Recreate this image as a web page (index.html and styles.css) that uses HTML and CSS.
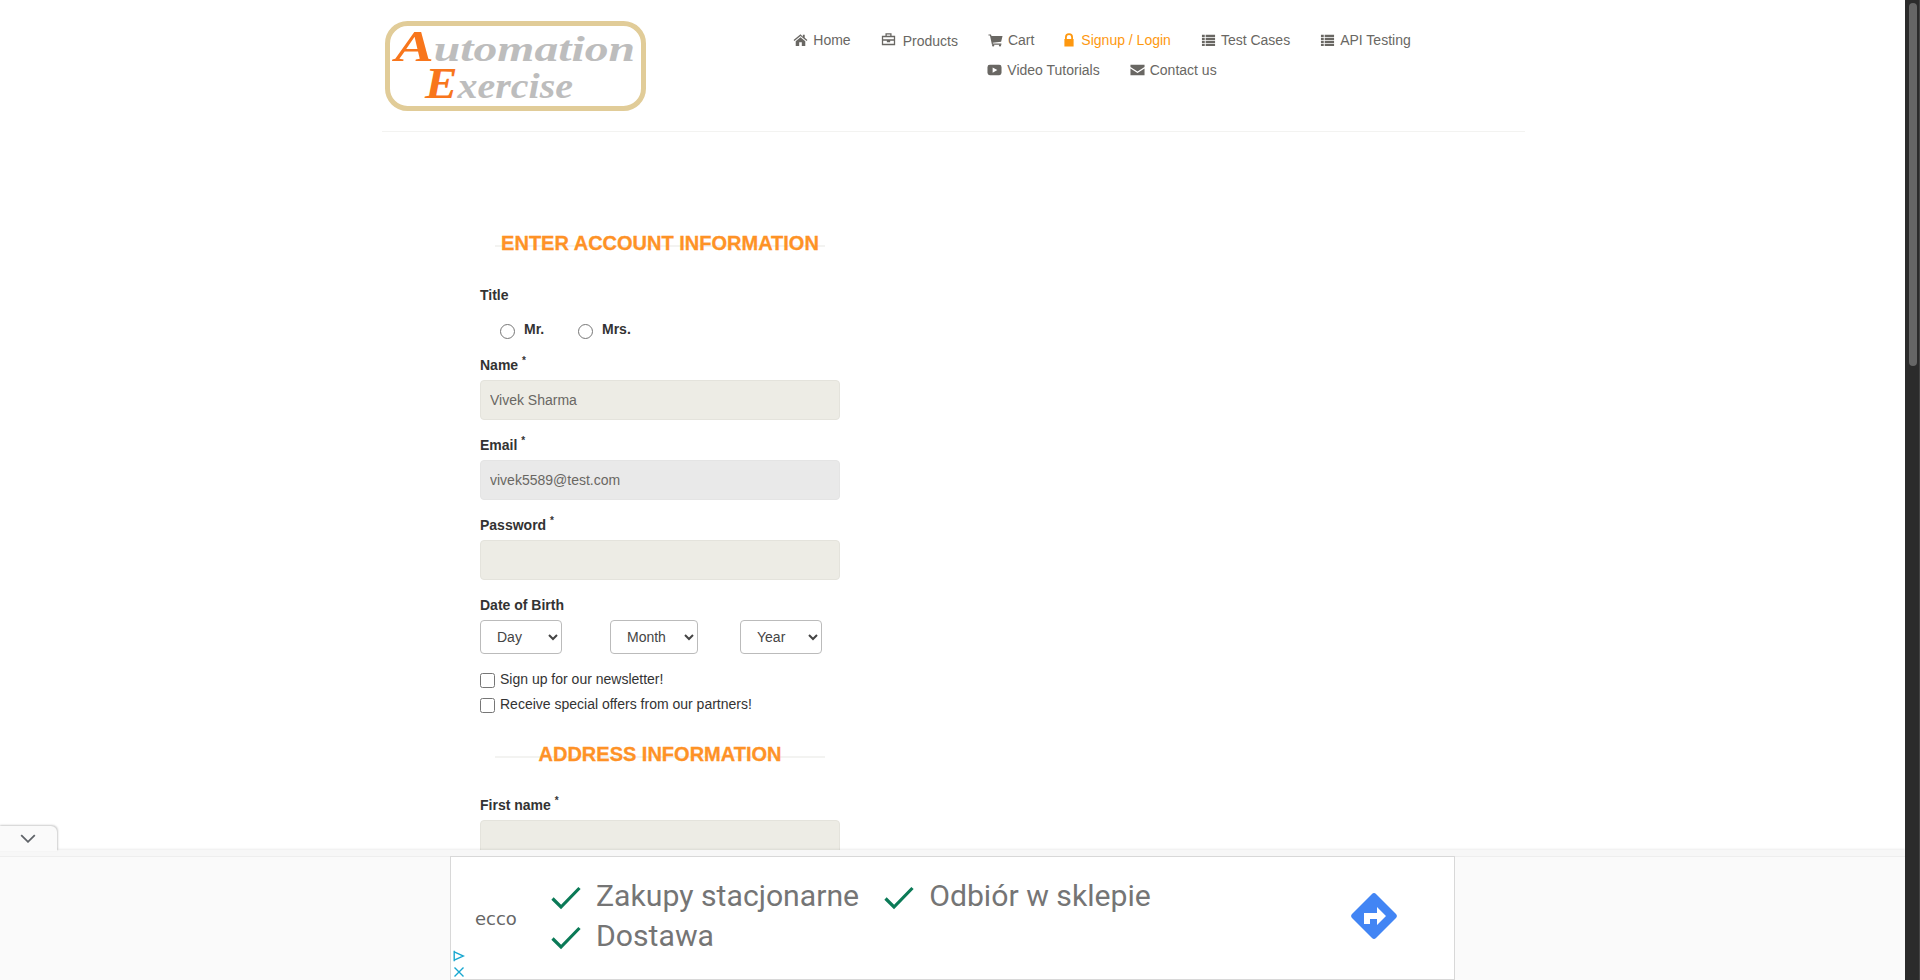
FILE: index.html
```html
<!DOCTYPE html>
<html lang="en">
<head>
<meta charset="utf-8">
<title>Automation Exercise - Signup</title>
<link rel="stylesheet" href="styles.css">
</head>
<body>
<div class="viewport">
  <div class="page">
    <header class="header">
      <a class="logo" href="#">
        <svg width="264" height="94" viewBox="0 0 264 94">
          <rect x="3.500" y="4.500" width="256" height="85" rx="20" class="logo-frame"/>
          <text class="logo-word"><tspan x="11" y="42" textLength="240" lengthAdjust="spacingAndGlyphs"><tspan class="logo-cap">A</tspan>utomation</tspan> <tspan x="41" y="79" textLength="148" lengthAdjust="spacingAndGlyphs"><tspan class="logo-cap">E</tspan>xercise</tspan></text>
        </svg>
      </a>
      <nav class="nav">
        <a class="nav-item" href="#"><svg class="ico" viewBox="0 0 16 14"><path d="M8 .8.6 7l.9 1.100L8 2.700l6.500 5.400.9-1.100-2.900-2.400V1.300h-2v2.300zM2.900 8.300V13.400h3.700V9.500h2.800v3.900h3.700V8.300L8 4.100z"/></svg>Home</a>
        <a class="nav-item products" href="#"><svg class="ico" viewBox="0 0 14 14"><path class="ico-line" d="M1 4.500h12v8H1zM1 8h12M4.600 4.500V1.800h4.800v2.700M6 8v1.500h2V8"/></svg>Products</a>
        <a class="nav-item" href="#"><svg class="ico" viewBox="0 0 16 14"><path d="M.5 1h2.700l.5 1.700h11.800L14 8.800l-9 1 .3 1h9v1.300H4.200L2.100 2.300H.5z"/><circle cx="5.500" cy="12.800" r="1.200"/><circle cx="12.800" cy="12.800" r="1.200"/></svg>Cart</a>
        <a class="nav-item active" href="#"><svg class="ico lock" viewBox="0 0 10 14"><path d="M1 6V4.200a4 4 0 0 1 8 0V6h.600v7.500H.4V6zm1.800 0h4.400V4.200a2.200 2.200 0 0 0-4.400 0z" fill-rule="evenodd"/></svg>Signup / Login</a>
        <a class="nav-item" href="#"><svg class="ico" viewBox="0 0 16 14"><path d="M1 1.500h3v2.200H1zM5 1.500h10v2.200H5zM1 4.700h3v2.200H1zM5 4.700h10v2.200H5zM1 7.900h3v2.200H1zM5 7.900h10v2.200H5zM1 11.100h3v2.200H1zM5 11.100h10v2.200H5z"/></svg>Test Cases</a>
        <a class="nav-item" href="#"><svg class="ico" viewBox="0 0 16 14"><path d="M1 1.500h3v2.200H1zM5 1.500h10v2.200H5zM1 4.700h3v2.200H1zM5 4.700h10v2.200H5zM1 7.900h3v2.200H1zM5 7.900h10v2.200H5zM1 11.100h3v2.200H1zM5 11.100h10v2.200H5z"/></svg>API Testing</a>
        <a class="nav-item" href="#"><svg class="ico" viewBox="0 0 16 14"><path fill-rule="evenodd" d="M3 1.500h10a2.500 2.500 0 0 1 2.500 2.500v6a2.500 2.500 0 0 1-2.500 2.500H3A2.500 2.500 0 0 1 .5 10V4A2.500 2.500 0 0 1 3 1.500zM6 4.200v5.600L11 7z"/></svg>Video Tutorials</a>
        <a class="nav-item" href="#"><svg class="ico" viewBox="0 0 16 14"><path d="M.5 1.500h15v2.300L8 8.600.5 3.800zM.5 5.400 8 10.200l7.500-4.800v7.100H.5z"/></svg>Contact us</a>
      </nav>
    </header>

    <main class="signup">
      <h2 class="section-title first"><span>ENTER ACCOUNT INFORMATION</span></h2>
      <form>
        <div class="label title-label">Title</div>
        <div class="radios">
          <label class="radio"><input type="radio" name="title"><span>Mr.</span></label>
          <label class="radio"><input type="radio" name="title"><span>Mrs.</span></label>
        </div>
        <div class="field">
          <label class="label">Name <sup>*</sup></label>
          <input class="text-input" type="text" value="Vivek Sharma">
        </div>
        <div class="field">
          <label class="label">Email <sup>*</sup></label>
          <input class="text-input locked" type="text" value="vivek5589@test.com" readonly>
        </div>
        <div class="field">
          <label class="label">Password <sup>*</sup></label>
          <input class="text-input" type="password">
        </div>
        <label class="label dob-label">Date of Birth</label>
        <div class="dob">
          <select class="sel sel-day"><option>Day</option></select>
          <select class="sel sel-month"><option>Month</option></select>
          <select class="sel sel-day"><option>Year</option></select>
        </div>
        <label class="check"><input type="checkbox"><span>Sign up for our newsletter!</span></label>
        <label class="check"><input type="checkbox"><span>Receive special offers from our partners!</span></label>
        <h2 class="section-title"><span>ADDRESS INFORMATION</span></h2>
        <div class="field">
          <label class="label">First name <sup>*</sup></label>
          <input class="text-input" type="text">
        </div>
      </form>
    </main>

    <aside class="ad-bar">
      <button class="ad-toggle" type="button" aria-label="Collapse">
        <svg width="16" height="9" viewBox="0 0 16 9"><path d="M1.200 1.200 8 7.800l6.800-6.600" class="chev"/></svg>
      </button>
      <div class="ad">
        <div class="ad-brand">ecco</div>
        <div class="ad-copy">
          <div class="ad-row">
            <span class="ad-point"><svg class="check-ico" viewBox="0 0 30 24"><path d="M1.500 12.500l8.500 8.500L28.500 2"/></svg>Zakupy stacjonarne</span>
            <span class="ad-point"><svg class="check-ico" viewBox="0 0 30 24"><path d="M1.500 12.500l8.500 8.500L28.500 2"/></svg>Odbiór w sklepie</span>
          </div>
          <div class="ad-row">
            <span class="ad-point"><svg class="check-ico" viewBox="0 0 30 24"><path d="M1.500 12.500l8.500 8.500L28.500 2"/></svg>Dostawa</span>
          </div>
        </div>
        <svg class="ad-go" width="46" height="46" viewBox="0 0 46 46">
          <path d="M23 0a3 3 0 0 1 2 1l20 20a3 3 0 0 1 0 4L25 45a3 3 0 0 1-4 0L1 25a3 3 0 0 1 0-4L21 1a3 3 0 0 1 2-1z" fill="#4285f4"/>
          <path d="M13 31V20h13v-6l9 9-9 9v-6h-7v5z" fill="#fff"/>
        </svg>
        <div class="ad-marks">
          <svg width="12" height="12" viewBox="0 0 12 12"><path d="M1.200 .8v10.400M1.200 1.800 10.500 6l-9.300 4.200" class="mark"/></svg>
          <svg width="12" height="12" viewBox="0 0 12 12"><path d="M1.500 1.500l9 9M10.500 1.500l-9 9" class="mark"/></svg>
        </div>
      </div>
    </aside>
  </div>
  <div class="scrollbar"><div class="thumb"></div></div>
</div>
</body>
</html>
```

FILE: styles.css
```css
* { box-sizing: border-box; }
html, body { margin: 0; height: 980px; overflow: hidden; background: #fff; }
body { font-family: "Liberation Sans", Arial, sans-serif; font-size: 14px; color: #696763; }

.viewport { display: flex; height: 980px; }
.page { position: relative; flex: 1; min-width: 0; height: 980px; overflow: hidden; }
.scrollbar { width: 15px; height: 980px; background: #2b2b2b; padding: 3px 2px 0 4px; border-right: 1px solid #444; }
.thumb { height: 363px; border-radius: 4px; background: #666; }

.header { display: flex; width: 1143px; height: 132px; margin-left: 382px; padding: 19px 0 0 2px; border-bottom: 1px solid #f3f3f1; }
.logo { display: block; width: 264px; height: 94px; }
.logo-frame { fill: #fff; stroke: #e1cc98; stroke-width: 5; }
.logo-word { font-family: "Liberation Serif", serif; font-style: italic; font-weight: 700; font-size: 36px; fill: #bdbdbd; }
.logo-cap { font-size: 44px; fill: #f8761c; }

.nav { display: flex; flex-wrap: wrap; justify-content: center; align-content: flex-start; width: 660px; margin: 6px 0 0 124px; }
.nav-item { display: flex; align-items: center; height: 30px; padding: 0 15px; color: #696763; text-decoration: none; white-space: nowrap; }
.nav-item.active { color: #fe980f; }
.nav-item.products { padding-top: 2px; }
.ico { width: 15px; height: 14px; margin-right: 5px; fill: #696763; }
.ico.lock { width: 10px; margin-right: 7px; fill: #fe980f; }
.ico-line { fill: none; stroke: #696763; stroke-width: 1.300; }
.nav-item.products .ico { margin: -5px 7px 0 0; }

.signup { width: 360px; margin: 99px 0 0 480px; }
.section-title { position: relative; margin: 0 0 30px; height: 24px; font-size: 20px; line-height: 24px; font-weight: 700; color: #fe9226; text-align: center; -webkit-text-stroke: .3px #fe9226; }
.section-title::before { content: ""; position: absolute; left: 15px; right: 15px; top: 14px; height: 2px; background: #f3f3f1; }
.section-title span { position: relative; }

.label { display: block; height: 20px; font-weight: 700; font-size: 14px; line-height: 20px; color: #333; }
.label sup { font-size: 10px; line-height: 0; }
.title-label { margin-bottom: 15px; }
.radios { display: flex; height: 20px; margin-bottom: 15px; padding-left: 20px; }
.radio { display: flex; align-items: center; width: 78px; font-weight: 700; color: #333; }
.radio input { width: 15px; height: 15px; margin: 3px 9px 0 0; }
.radio span { margin-top: -2px; }
.field { margin-bottom: 15px; }
.field .label { margin-bottom: 5px; }
.text-input { display: block; width: 100%; height: 40px; padding: 0 9px; border: 1px solid #e4e3dc; border-radius: 4px; background: #edece5; color: #696763; font: 14px "Liberation Sans", Arial, sans-serif; outline: 0; }
.text-input.locked { background: #e9e9e9; border-color: #e4e4e4; }
.dob-label { margin-bottom: 5px; }
.dob { display: grid; grid-template-columns: 130px 130px 100px; height: 34px; margin-bottom: 15px; }
.sel { height: 34px; padding: 0 0 0 12px; border: 1px solid #bbb; border-radius: 4px; background: #fff; color: #444; font: 14px "Liberation Sans", Arial, sans-serif; }
.sel-day { width: 82px; }
.sel-month { width: 88px; }
.check { display: flex; align-items: center; height: 20px; margin-bottom: 5px; color: #333; font-size: 14px; }
.check input { width: 15px; height: 15px; margin: 2px 5px 0 0; }
.check + .section-title { margin: 28px 0 29px; }

.ad-bar { position: absolute; left: 0; right: 0; bottom: 0; height: 130px; background: #fafafa; box-shadow: 0 -1px 2px rgba(0,0,0,.08); padding-top: 6px; }
.ad-bar::before { content: ""; position: absolute; left: 0; right: 0; top: 0; height: 6px; background: #f7f7f7; border-bottom: 1px solid #eee; }
.ad-toggle { position: absolute; left: -1px; top: -24px; width: 58px; height: 25px; padding: 0; background: #fafafa; border: 0; border-radius: 0 6px 0 0; box-shadow: 1px -1px 2px rgba(0,0,0,.2); display: flex; align-items: center; justify-content: center; }
.chev { fill: none; stroke: #5f6368; stroke-width: 1.800; }
.ad { position: relative; display: flex; align-items: center; width: 1005px; height: 124px; margin-left: 450px; background: #fff; border: 1px solid #d8d8d8; }
.ad-brand { width: 100px; padding-left: 24px; font-family: "DejaVu Sans", sans-serif; font-size: 18px; color: #666; }
.ad-copy { display: flex; flex-direction: column; gap: 8px; margin-top: -4px; }
.ad-row { display: flex; height: 32px; }
.ad-point { display: flex; align-items: center; margin-right: 25px; font-family: Roboto, sans-serif; font-size: 30.200px; line-height: 32px; color: #757575; white-space: nowrap; }
.check-ico { width: 30px; height: 24px; margin: 3px 15px 0 0; fill: none; stroke: #0b7a57; stroke-width: 3.200; }
.ad-go { position: absolute; left: 900px; top: 36px; }
.ad-marks { position: absolute; left: 2px; bottom: 1px; display: flex; flex-direction: column; gap: 4px; }
.mark { fill: none; stroke: #18a7d0; stroke-width: 1.400; }
```
